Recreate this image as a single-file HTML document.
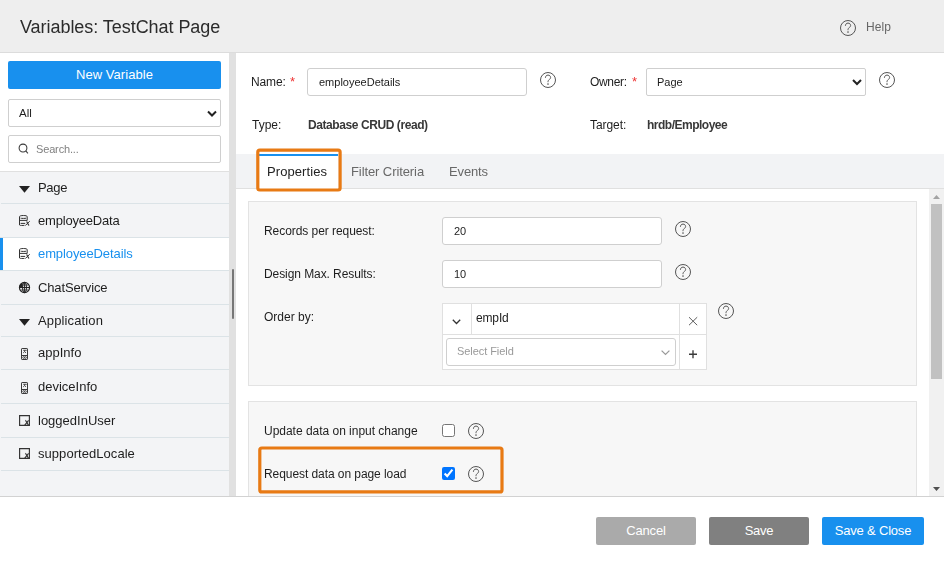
<!DOCTYPE html>
<html><head><meta charset="utf-8">
<style>
*{box-sizing:border-box;margin:0;padding:0}
html,body{width:944px;height:565px;overflow:hidden;background:#fff;font-family:"Liberation Sans",sans-serif;color:#1e1e1e}
.a{position:absolute}
.t{position:absolute;white-space:nowrap;line-height:1;will-change:transform}
.si{font-size:13px;color:#1e1e1e}
svg{position:absolute;overflow:visible}
#hdr{left:0;top:0;width:944px;height:53px;background:#eeeeee;border-bottom:1px solid #dcdcdc}
.inp{position:absolute;background:#fff;border:1px solid #cfcfcf;border-radius:3px}
.row{position:absolute;left:0;width:229px;background:#f3f4f6;border-top:1px solid #dbe3e7}
.btn{position:absolute;color:#fff;font-size:13px;text-align:center;line-height:28px;border-radius:2px}
</style></head><body>
<svg width="0" height="0" style="position:absolute">
<defs>
<symbol id="q" viewBox="0 0 16 16">
<circle cx="8" cy="8" r="7.5" fill="none" stroke="#555" stroke-width="1"/>
<path d="M5.4 5.8C5.4 4.2 6.5 3.1 8 3.1C9.5 3.1 10.6 4.1 10.6 5.5C10.6 6.7 9.7 7.2 9 7.8C8.3 8.3 8 8.9 8 10.2" fill="none" stroke="#555" stroke-width="1"/>
<circle cx="8" cy="12.1" r="0.8" fill="#555"/>
</symbol>
</defs>
</svg>

<!-- header -->
<div id="hdr" class="a"></div>
<div class="t" style="left:20px;top:18px;font-size:18px;color:#2b2b2b;letter-spacing:-0.05px">Variables: TestChat Page</div>
<svg style="left:840px;top:20px" width="16" height="16"><use href="#q"/></svg>
<div class="t" style="left:866px;top:21px;font-size:12px;color:#666;letter-spacing:0.05px">Help</div>

<!-- sidebar -->
<div class="a" style="left:0;top:53px;width:229px;height:443px;background:#fff"></div>
<div class="btn" style="left:8px;top:61px;width:213px;height:28px;line-height:28px;background:#1890ee;font-size:13px;letter-spacing:0.06px">New Variable</div>
<div class="inp" style="left:8px;top:99px;width:213px;height:28px;border-radius:2px"></div>
<div class="t" style="left:19px;top:107.5px;font-size:11.5px;color:#1e1e1e">All</div>
<svg style="left:207px;top:110px" width="10" height="8"><path d="M1 1.5L5 5.5L9 1.5" fill="none" stroke="#222" stroke-width="2"/></svg>
<div class="inp" style="left:8px;top:135px;width:213px;height:28px;border-radius:2px"></div>
<svg style="left:18px;top:143px" width="12" height="12"><circle cx="5" cy="5" r="3.9" fill="none" stroke="#3a3a3a" stroke-width="1.05"/><path d="M7.8 7.8L9.9 10.3" stroke="#3a3a3a" stroke-width="1.05"/></svg>
<div class="t" style="left:36px;top:144px;font-size:11px;color:#808080;letter-spacing:-0.15px">Search...</div>

<div class="a" style="left:0;top:171px;width:229px;height:325px;background:#f3f4f6;border-top:1px solid #e0e0e0"></div>
<div class="a" style="left:1px;top:203px;width:228px;height:1px;background:#dbe3e7"></div>
<div class="a" style="left:0;top:237px;width:229px;height:34px;background:#fff;border-top:1px solid #dbe3e7;border-bottom:1px solid #dbe3e7"></div>
<div class="a" style="left:0;top:238px;width:3px;height:32px;background:#1890ee"></div>
<div class="a" style="left:1px;top:304px;width:228px;height:1px;background:#dbe3e7"></div>
<div class="a" style="left:1px;top:336px;width:228px;height:1px;background:#dbe3e7"></div>
<div class="a" style="left:1px;top:369px;width:228px;height:1px;background:#dbe3e7"></div>
<div class="a" style="left:1px;top:403px;width:228px;height:1px;background:#dbe3e7"></div>
<div class="a" style="left:1px;top:437px;width:228px;height:1px;background:#dbe3e7"></div>
<div class="a" style="left:1px;top:470px;width:228px;height:1px;background:#dbe3e7"></div>

<!-- tree icons -->
<svg style="left:19px;top:186px" width="11" height="7"><path d="M0 0H11L5.5 6.8Z" fill="#222"/></svg>
<svg style="left:19px;top:319px" width="11" height="7"><path d="M0 0H11L5.5 6.8Z" fill="#222"/></svg>
<div class="t si" style="left:38px;top:181px;letter-spacing:-0.3px">Page</div>
<div class="t si" style="left:38px;top:314px;letter-spacing:0.13px">Application</div>

<div class="t si" style="left:38px;top:214px;letter-spacing:-0.2px">employeeData</div>
<div class="t si" style="left:38px;top:247px;color:#1890ee;letter-spacing:-0.1px">employeeDetails</div>
<div class="t si" style="left:38px;top:281px;letter-spacing:-0.13px">ChatService</div>
<div class="t si" style="left:38px;top:346px;letter-spacing:0">appInfo</div>
<div class="t si" style="left:38px;top:380px;letter-spacing:0">deviceInfo</div>
<div class="t si" style="left:38px;top:414px;letter-spacing:0">loggedInUser</div>
<div class="t si" style="left:38px;top:447px;letter-spacing:0.05px">supportedLocale</div>


<!-- item icons -->
<svg style="left:17px;top:213px" width="16" height="16"><g fill="none" stroke="#333" stroke-width="1"><path d="M2.5 12V3.6C2.5 2.9 4.2 2.5 6.4 2.5C8.6 2.5 10.2 2.9 10.2 3.6V7.6"/><path d="M3.6 5.2C4.5 5.5 8.3 5.5 9.2 5.2"/><path d="M2.5 7.4H10"/><path d="M3.6 10.4H8.2"/><path d="M2.7 12.3C3.2 12.5 5.8 12.5 7.4 12.4"/><path d="M8.3 12.6L12.7 8.2"/><path d="M9.6 8.5L11.9 12.5" stroke-width="1.2"/></g></svg>
<svg style="left:17px;top:246px" width="16" height="16"><g fill="none" stroke="#333" stroke-width="1"><path d="M2.5 12V3.6C2.5 2.9 4.2 2.5 6.4 2.5C8.6 2.5 10.2 2.9 10.2 3.6V7.6"/><path d="M3.6 5.2C4.5 5.5 8.3 5.5 9.2 5.2"/><path d="M2.5 7.4H10"/><path d="M3.6 10.4H8.2"/><path d="M2.7 12.3C3.2 12.5 5.8 12.5 7.4 12.4"/><path d="M8.3 12.6L12.7 8.2"/><path d="M9.6 8.5L11.9 12.5" stroke-width="1.2"/></g></svg>
<svg style="left:17px;top:279px" width="16" height="16"><g fill="none" stroke="#222"><circle cx="7.5" cy="8.5" r="5.1" stroke-width="1.1"/><ellipse cx="7.5" cy="8.5" rx="2" ry="5.1" stroke-width="1"/><path d="M7.5 3.4V13.6" stroke-width="0.9"/><path d="M2.4 8.5H12.6" stroke-width="1.1"/><path d="M3.4 6H11.6M3.4 11H11.6" stroke-width="0.8"/></g><path d="M2.5 8.4C2.5 6.2 3.6 4.6 5.5 3.8V8.4Z" fill="#222"/></svg>
<svg style="left:17px;top:346px" width="16" height="16"><g fill="none" stroke="#3a3a3a" stroke-width="1"><rect x="4.5" y="2.5" width="6" height="11" rx="0.6"/><path d="M4.5 9.5H10.5"/><path d="M6.2 4.3H9.7M7.6 4.3V5.6M6.2 6.9L7.6 5.6L9 6.9" stroke-width="0.9"/><circle cx="6.6" cy="11.5" r="0.9" stroke-width="0.8"/><circle cx="8.5" cy="11.5" r="0.9" stroke-width="0.8"/></g></svg>
<svg style="left:17px;top:380px" width="16" height="16"><g fill="none" stroke="#3a3a3a" stroke-width="1"><rect x="4.5" y="2.5" width="6" height="11" rx="0.6"/><path d="M4.5 9.5H10.5"/><path d="M6.2 4.3H9.7M7.6 4.3V5.6M6.2 6.9L7.6 5.6L9 6.9" stroke-width="0.9"/><circle cx="6.6" cy="11.5" r="0.9" stroke-width="0.8"/><circle cx="8.5" cy="11.5" r="0.9" stroke-width="0.8"/></g></svg>
<svg style="left:17px;top:413px" width="16" height="16"><g fill="none" stroke="#333"><path d="M2.6 12.4V2.6H12.4V12.4Z" stroke-width="1.15"/><path d="M7.4 12.6L11.6 7.3" stroke-width="1.1"/><path d="M8.3 7.4C9.2 7.6 10.2 10.8 11.8 12.6" stroke-width="1.1"/></g></svg>
<svg style="left:17px;top:446px" width="16" height="16"><g fill="none" stroke="#333"><path d="M2.6 12.4V2.6H12.4V12.4Z" stroke-width="1.15"/><path d="M7.4 12.6L11.6 7.3" stroke-width="1.1"/><path d="M8.3 7.4C9.2 7.6 10.2 10.8 11.8 12.6" stroke-width="1.1"/></g></svg>

<!-- splitter -->
<div class="a" style="left:229px;top:53px;width:7px;height:443px;background:#e1e1e1"></div>
<div class="a" style="left:232px;top:269px;width:2px;height:50px;background:#777;border-radius:1px"></div>

<!-- main -->
<div class="t" style="left:251px;top:76px;font-size:12px;letter-spacing:-0.12px">Name:</div>
<div class="t" style="left:290px;top:75px;font-size:13px;color:#e33">*</div>
<div class="inp" style="left:307px;top:68px;width:220px;height:28px"></div>
<div class="t" style="left:319px;top:77px;font-size:11px;color:#1c1c1c">employeeDetails</div>
<svg style="left:540px;top:72px" width="16" height="16"><use href="#q"/></svg>

<div class="t" style="left:590px;top:76px;font-size:12px;letter-spacing:-0.34px">Owner:</div>
<div class="t" style="left:632px;top:75px;font-size:13px;color:#e33">*</div>
<div class="inp" style="left:646px;top:68px;width:220px;height:28px;border-radius:2px"></div>
<div class="t" style="left:657px;top:77px;font-size:11px;color:#1c1c1c">Page</div>
<svg style="left:852px;top:79px" width="10" height="7"><path d="M1 1L5 5L9 1" fill="none" stroke="#222" stroke-width="2"/></svg>
<svg style="left:879px;top:72px" width="16" height="16"><use href="#q"/></svg>

<div class="t" style="left:252px;top:119px;font-size:12px">Type:</div>
<div class="t" style="left:308px;top:119px;font-size:12px;font-weight:bold;color:#383838;letter-spacing:-0.42px">Database CRUD (read)</div>
<div class="t" style="left:590px;top:119px;font-size:12px;letter-spacing:-0.07px">Target:</div>
<div class="t" style="left:647px;top:119px;font-size:12px;font-weight:bold;color:#383838;letter-spacing:-0.5px">hrdb/Employee</div>

<!-- tabs -->
<div class="a" style="left:236px;top:154px;width:708px;height:35px;background:#f2f3f5;border-bottom:1px solid #e0e0e0"></div>
<div class="a" style="left:259px;top:154px;width:79px;height:35px;background:#fff;border-top:2px solid #1890ee"></div>
<div class="t" style="left:267px;top:165px;font-size:13px;color:#222;letter-spacing:0.08px">Properties</div>
<div class="t" style="left:351px;top:165px;font-size:13px;color:#686868;letter-spacing:-0.09px">Filter Criteria</div>
<div class="t" style="left:449px;top:165px;font-size:13px;color:#686868;letter-spacing:-0.14px">Events</div>
<svg style="left:0;top:0" width="944" height="565"><rect x="257.8" y="150.1" width="82.3" height="39.9" rx="2" fill="none" stroke="#e87a14" stroke-width="3.2"/></svg>

<!-- content panel 1 -->
<div class="a" style="left:248px;top:201px;width:669px;height:185px;background:#f7f7f7;border:1px solid #e3e3e3"></div>
<div class="t" style="left:264px;top:225px;font-size:12px;letter-spacing:-0.06px">Records per request:</div>
<div class="inp" style="left:442px;top:217px;width:220px;height:28px"></div>
<div class="t" style="left:454px;top:226px;font-size:11px">20</div>
<svg style="left:675px;top:221px" width="16" height="16"><use href="#q"/></svg>

<div class="t" style="left:264px;top:268px;font-size:12px;letter-spacing:-0.08px">Design Max. Results:</div>
<div class="inp" style="left:442px;top:260px;width:220px;height:28px"></div>
<div class="t" style="left:454px;top:269px;font-size:11px">10</div>
<svg style="left:675px;top:264px" width="16" height="16"><use href="#q"/></svg>

<div class="t" style="left:264px;top:311px;font-size:12px">Order by:</div>
<div class="a" style="left:442px;top:303px;width:265px;height:67px;background:#fff;border:1px solid #e0e0e0"></div>
<div class="a" style="left:443px;top:334px;width:263px;height:1px;background:#e0e0e0"></div>
<div class="a" style="left:471px;top:304px;width:1px;height:30px;background:#e0e0e0"></div>
<div class="a" style="left:679px;top:304px;width:1px;height:65px;background:#e0e0e0"></div>
<svg style="left:452px;top:319px" width="9" height="6"><path d="M0.8 0.8L4.5 4.5L8.2 0.8" fill="none" stroke="#333" stroke-width="1.3"/></svg>
<div class="t" style="left:476px;top:312px;font-size:12px;color:#222;letter-spacing:-0.15px">empId</div>
<svg style="left:688px;top:316px" width="10" height="10"><path d="M1 1.2L9.2 9.2M9.2 1.2L1 9.2" stroke="#555" stroke-width="0.95"/></svg>
<div class="inp" style="left:446px;top:338px;width:230px;height:28px;border-radius:3px"></div>
<div class="t" style="left:457px;top:346px;font-size:11px;color:#999;letter-spacing:-0.06px">Select Field</div>
<svg style="left:661px;top:350px" width="9" height="6"><path d="M0.6 0.6L4.5 4.4L8.4 0.6" fill="none" stroke="#999" stroke-width="1.25"/></svg>
<svg style="left:688px;top:349px" width="10" height="10"><path d="M5 1.2V9.2M1 5.2H9" stroke="#3a3a3a" stroke-width="1.35"/></svg>
<svg style="left:718px;top:303px" width="16" height="16"><use href="#q"/></svg>

<!-- content panel 2 -->
<div class="a" style="left:248px;top:401px;width:669px;height:95px;background:#f7f7f7;border:1px solid #e3e3e3;border-bottom:0"></div>
<div class="t" style="left:264px;top:425px;font-size:12px;letter-spacing:-0.02px">Update data on input change</div>
<input type="checkbox" class="a" style="left:442px;top:424px;width:13px;height:13px;margin:0">
<svg style="left:468px;top:423px" width="16" height="16"><use href="#q"/></svg>
<div class="t" style="left:264px;top:468px;font-size:12px;letter-spacing:-0.07px">Request data on page load</div>
<input type="checkbox" checked class="a" style="left:442px;top:467px;width:13px;height:13px;margin:0">
<svg style="left:468px;top:466px" width="16" height="16"><use href="#q"/></svg>
<svg style="left:0;top:0" width="944" height="565"><rect x="259.8" y="448" width="242.2" height="43.9" rx="2" fill="none" stroke="#e87a14" stroke-width="3.2"/></svg>

<!-- scrollbar -->
<div class="a" style="left:929px;top:189px;width:15px;height:307px;background:#f1f1f1"></div>
<svg style="left:933px;top:195px" width="7" height="4"><path d="M0 4H7L3.5 0Z" fill="#a3a3a3"/></svg>
<div class="a" style="left:931px;top:204px;width:11px;height:175px;background:#c1c1c1"></div>
<svg style="left:933px;top:487px" width="7" height="4"><path d="M0 0H7L3.5 4Z" fill="#505050"/></svg>

<!-- footer -->
<div class="a" style="left:0;top:496px;width:944px;height:1px;background:#d2d2d2"></div>
<div class="btn" style="left:596px;top:517px;width:100px;height:28px;background:#aaaaaa;letter-spacing:-0.14px">Cancel</div>
<div class="btn" style="left:709px;top:517px;width:100px;height:28px;background:#808080;letter-spacing:-0.27px">Save</div>
<div class="btn" style="left:822px;top:517px;width:102px;height:28px;background:#1890ee;letter-spacing:-0.2px">Save &amp; Close</div>

</body></html>
